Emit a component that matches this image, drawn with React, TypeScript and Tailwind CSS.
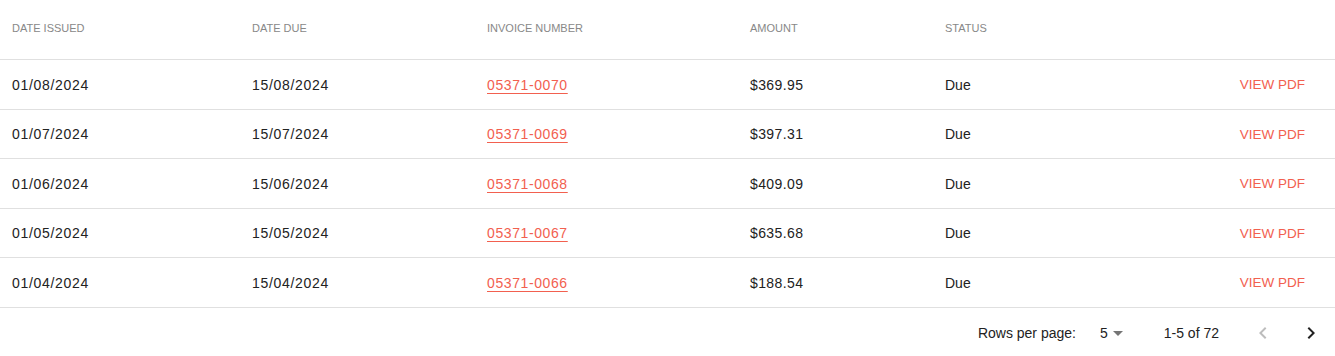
import React from 'react'

const rows = [
  { issued: '01/08/2024', due: '15/08/2024', number: '05371-0070', amount: '$369.95', status: 'Due' },
  { issued: '01/07/2024', due: '15/07/2024', number: '05371-0069', amount: '$397.31', status: 'Due' },
  { issued: '01/06/2024', due: '15/06/2024', number: '05371-0068', amount: '$409.09', status: 'Due' },
  { issued: '01/05/2024', due: '15/05/2024', number: '05371-0067', amount: '$635.68', status: 'Due' },
  { issued: '01/04/2024', due: '15/04/2024', number: '05371-0066', amount: '$188.54', status: 'Due' },
]

const cols = 'grid grid-cols-[240px_235px_263px_195px_1fr_auto] items-center pl-3 pr-[30px]'

export default function App() {
  return (
    <div className="w-[1335px] h-[356px] bg-white font-['Liberation_Sans',sans-serif] text-[#222]">
      <div className={`${cols} h-[60px] pb-0.5 border-b border-[#e0e0e0] text-[11px] uppercase text-[#888]`}>
        <div>Date issued</div>
        <div>Date due</div>
        <div>Invoice number</div>
        <div>Amount</div>
        <div>Status</div>
        <div />
      </div>

      {rows.map((row, idx) => (
        <div key={idx} className={`${cols} h-[49.5px] pt-[2px] border-b border-[#e0e0e0] text-[14px]`}>
          <div className="tracking-[0.7px]">{row.issued}</div>
          <div className="tracking-[0.7px]">{row.due}</div>
          <div>
            <a href="#" className="text-[#f2604f] underline underline-offset-[3px] tracking-[0.6px]">
              {row.number}
            </a>
          </div>
          <div className="tracking-[0.4px]">{row.amount}</div>
          <div>{row.status}</div>
          <a href="#" className="text-[#f2604f] text-[13.5px] uppercase">View PDF</a>
        </div>
      ))}

      <div className="flex h-[49px] pt-[2px] items-center justify-end text-[14px] text-[#222]">
        <span className="mr-[22px]">Rows per page:</span>
        <div className="flex items-center mr-[34px]">
          <span className="ml-0.5">5</span>
          <svg viewBox="0 0 24 24" className="w-6 h-6 fill-[#757575] -ml-0.5">
            <path d="M7 10l5 5 5-5z" />
          </svg>
        </div>
        <span>1-5 of 72</span>
        <div className="flex items-center ml-[20px]">
          <button type="button" className="w-12 h-10 flex items-center justify-center">
            <svg viewBox="0 0 24 24" className="w-6 h-6 fill-[#bdbdbd]">
              <path d="M15.41 16.59 10.83 12l4.58-4.59L14 6l-6 6 6 6z" />
            </svg>
          </button>
          <button type="button" className="w-12 h-10 flex items-center justify-center">
            <svg viewBox="0 0 24 24" className="w-6 h-6 fill-[#222]">
              <path d="M8.59 16.59 13.17 12 8.59 7.41 10 6l6 6-6 6z" />
            </svg>
          </button>
        </div>
      </div>
    </div>
  )
}
